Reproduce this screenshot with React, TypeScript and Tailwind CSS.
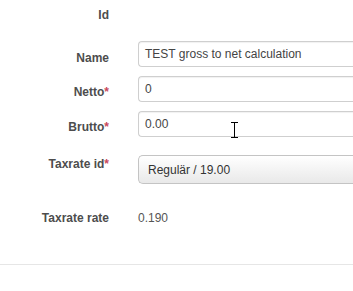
const labelCls =
  "w-[109px] shrink-0 text-right text-[12px] leading-[16px] font-bold text-[#4d4d4d]";

function Req() {
  return <span className="text-[#c9475a]">*</span>;
}

function TextInput({ value }: { value: string }) {
  return (
    <div className="ml-[29px] flex-1 h-[26px] rounded-l-[4px] border border-r-0 border-[#cfcfcf] pl-[6px] pt-[4px] text-[12px] leading-[17px] text-[#444] shadow-[inset_0_1px_1px_rgba(0,0,0,0.06)]">
      {value}
    </div>
  );
}

export default function App() {
  return (
    <div
      className="relative w-[353px] h-[291px] overflow-hidden bg-white"
      style={{ fontFamily: '"Liberation Sans", Arial, sans-serif' }}
    >
      <div className="pt-[7px]">
        {/* Id */}
        <div className="flex h-[34px]">
          <div className={labelCls}>Id</div>
        </div>

        {/* Name */}
        <div className="flex items-start h-[35px]">
          <div className={labelCls + " mt-[9px]"}>Name</div>
          <TextInput value="TEST gross to net calculation" />
        </div>

        {/* Netto */}
        <div className="flex items-start h-[35px]">
          <div className={labelCls + " mt-[8px]"}>
            Netto<Req />
          </div>
          <TextInput value="0" />
        </div>

        {/* Brutto */}
        <div className="flex items-start h-[44px]">
          <div className={labelCls + " mt-[8px]"}>
            Brutto<Req />
          </div>
          <TextInput value="0.00" />
        </div>

        {/* Taxrate id */}
        <div className="flex items-start h-[50px]">
          <div className={labelCls + " mt-[1px]"}>
            Taxrate id<Req />
          </div>
          <div className="ml-[29px] flex-1 h-[29px] rounded-l-[5px] border border-r-0 border-[#c4c4c4] bg-gradient-to-b from-white to-[#e9e9e9] pl-[9px] pt-[6px] text-[12px] leading-[17px] text-[#333]">
            Regulär / 19.00
          </div>
        </div>

        {/* Taxrate rate */}
        <div className="flex items-start">
          <div className={labelCls + " mt-[5px]"}>Taxrate rate</div>
          <div className="ml-[29px] mt-[5px] text-[12px] leading-[16px] text-[#555]">0.190</div>
        </div>
      </div>

      <div className="absolute left-0 right-0 top-[264px] h-px bg-[#e6e6e6]" />

      {/* mouse cursor */}
      <svg
        className="absolute left-[230px] top-[122px]"
        width="9"
        height="16"
        viewBox="0 0 9 16"
      >
        <path d="M1 0.5h7M1 15.5h7M4.5 1v14" stroke="#000" strokeWidth="1" fill="none" />
      </svg>
    </div>
  );
}
